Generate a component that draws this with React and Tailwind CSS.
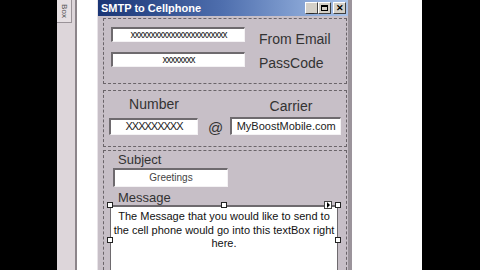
const font = { fontFamily: '"Liberation Sans", Arial, sans-serif' };

const TextBox = ({ className, children }) => (
    <div className={`bg-white border-t-2 border-l-2 border-[#6e6a6e] border-b border-r border-b-[#f4f2f4] border-r-[#f4f2f4] flex items-center justify-center text-[10px] text-[#222] leading-none ${className}`}>
        {children}
    </div>
);

const Handle = ({ className }) => (
    <div className={`absolute w-[6px] h-[6px] bg-white border border-[#222] ${className}`} />
);

const TitleButton = ({ children }) => (
    <div className="w-[13px] h-[12px] bg-[#d4d0c8] border border-t-white border-l-white border-b-[#404040] border-r-[#404040] flex items-center justify-center text-[9px] font-bold text-black leading-none">
        {children}
    </div>
);

export default function App() {
    return (
        <div className="w-[480px] h-[270px] flex overflow-hidden bg-white" style={font}>
            <div className="w-[57px] bg-black shrink-0" />
            {/* toolbox strip */}
            <div className="w-[18px] shrink-0 bg-[#ddd6da] flex flex-col">
                <div className="h-[23px] w-[15px] border-r border-b border-[#9a9398] bg-[#e6e0e3] flex items-center justify-center">
                    <span className="text-[8px] text-[#555] rotate-90 leading-none">Box</span>
                </div>
            </div>
            <div className="w-[2px] shrink-0 bg-[#8c858a]" />
            <div className="w-[20px] shrink-0 bg-white" />

            {/* form window */}
            <div className="w-[255px] shrink-0 flex flex-col bg-[#c7bfc7] border-l border-[#e8e4e8] border-r-4 border-r-[#9b949b]">
                <div className="h-[16px] shrink-0 flex items-center justify-between pl-[3px] pr-[2px] bg-gradient-to-r from-[#1a3575] via-[#4f6fae] to-[#a9c3ea]">
                    <span className="text-white font-bold text-[11px] leading-none">SMTP to Cellphone</span>
                    <div className="flex gap-0">
                        <TitleButton><span className="mt-[5px]">_</span></TitleButton>
                        <TitleButton><span className="w-[7px] h-[6px] border border-black border-t-2" /></TitleButton>
                        <div className="w-[2px]" />
                        <TitleButton>✕</TitleButton>
                    </div>
                </div>

                <div className="flex-1 pl-[5px] pr-[1px] pt-[2px] flex flex-col">
                    {/* group 1 */}
                    <div className="h-[66px] shrink-0 border border-dashed border-[#6a6469] pl-[7px] pt-[8px] flex flex-col gap-[10px]">
                        <div className="flex items-center h-[15px]">
                            <TextBox className="w-[134px] h-[15px]">
                                <span className="tracking-[-1px]">xxxxxxxxxxxxxxxxxxxxxxxx</span>
                            </TextBox>
                            <span className="ml-[14px] translate-y-[4px] text-[14px] text-[#333] leading-none">From Email</span>
                        </div>
                        <div className="flex items-center h-[15px]">
                            <TextBox className="w-[134px] h-[15px]">
                                <span className="tracking-[-1px]">xxxxxxxx</span>
                            </TextBox>
                            <span className="ml-[14px] translate-y-[3px] text-[14px] text-[#333] leading-none">PassCode</span>
                        </div>
                    </div>

                    {/* group 2 */}
                    <div className="mt-[6px] h-[57px] shrink-0 border border-dashed border-[#6a6469] pl-[5px] pt-[2px] flex flex-col">
                        <div className="flex h-[22px] items-center">
                            <span className="w-[90px] text-center text-[14px] text-[#333] leading-none">Number</span>
                            <span className="ml-[42px] w-[100px] text-center text-[14px] text-[#333] leading-none translate-y-[2px]">Carrier</span>
                        </div>
                        <div className="flex items-center mt-[2px]">
                            <TextBox className="w-[89px] h-[17px]">
                                <span className="text-[11px] tracking-[-1px]">XXXXXXXXX</span>
                            </TextBox>
                            <span className="ml-[10px] mt-[2px] text-[15px] text-[#333] leading-none">@</span>
                            <TextBox className="ml-[7px] w-[111px] h-[18px]">
                                <span className="text-[11px]">MyBoostMobile.com</span>
                            </TextBox>
                        </div>
                    </div>

                    {/* group 3 */}
                    <div className="mt-[3px] flex-1 border border-dashed border-[#6a6469] border-b-0 pl-[9px] pt-[1px] flex flex-col">
                        <span className="ml-[5px] text-[13px] text-[#333] leading-[15px]">Subject</span>
                        <TextBox className="mt-[1px] w-[115px] h-[19px]">
                            <span className="text-[10px] text-[#444]">Greetings</span>
                        </TextBox>
                        <span className="ml-[5px] mt-[3px] text-[13px] text-[#333] leading-[15px]">Message</span>
                        <div className="relative -ml-[3px] w-[228px] flex-1">
                            <div className="h-full bg-white border-t-2 border-[#6e6a6e] border-l border-r border-x-[#6e6a6e] pt-[3px] text-center text-[11px] leading-[13.5px] text-[#111]">
                                The Message that you would like to send to the cell phone would go into this textBox right here.
                            </div>
                            <Handle className="-left-[3px] -top-[3px]" />
                            <Handle className="left-[111px] -top-[3px]" />
                            <Handle className="-right-[3px] -top-[3px]" />
                            <Handle className="-left-[3px] top-[32px]" />
                            <Handle className="-right-[3px] top-[32px]" />
                            <div className="absolute right-[6px] -top-[4px] w-[8px] h-[8px] bg-white border border-[#444] flex items-center justify-center">
                                <div className="w-0 h-0 border-y-[3px] border-y-transparent border-l-[3px] border-l-black" />
                            </div>
                        </div>
                    </div>
                </div>
            </div>

            <div className="w-[70px] shrink-0 bg-white" />
            <div className="flex-1 bg-black" />
        </div>
    );
}
